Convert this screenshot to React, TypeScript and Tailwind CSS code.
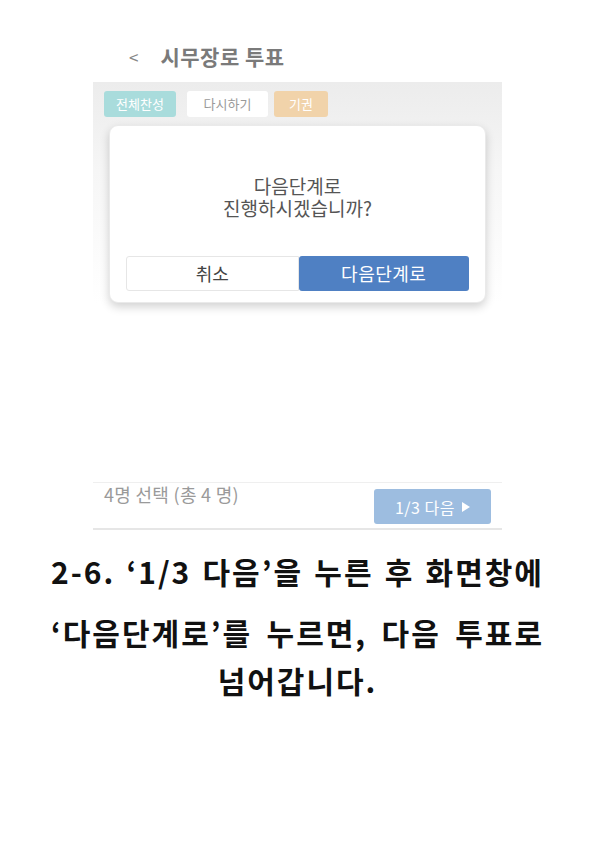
import React from "react";

const kr = { fontFamily: '"Noto Sans CJK KR", "Noto Sans", sans-serif' };

const line1 = ["2-6.", "‘1/3", "다음’을", "누른", "후", "화면창에"];
const line2 = ["‘다음단계로’를", "누르면,", "다음", "투표로"];

const App: React.FC = () => {
  return (
    <div className="w-[595px] min-h-[841px] bg-white" style={kr}>
      {/* phone screenshot */}
      <div className="mx-auto w-[409px] pt-[30px]">
        {/* header */}
        <div className="flex items-center h-[52px] pl-[36px]">
          <span className="text-[17px] text-[#888] leading-none">&lt;</span>
          <span className="ml-[22px] text-[21px] font-bold text-[#7a7a7a] tracking-[0.5px] leading-none">
            시무장로 투표
          </span>
        </div>

        {/* dimmed band with buttons + dialog */}
        <div className="bg-gradient-to-b from-[#ececec] via-[#f6f6f6] via-40% to-white">
          <div className="flex gap-[11px] pl-[11px] pt-[9px]">
            <div className="w-[72px] h-[26px] rounded-[3px] bg-[#a9dcdc] text-white text-[13px] flex items-center justify-center">
              전체찬성
            </div>
            <div className="w-[81px] h-[26px] rounded-[3px] bg-white text-[#9a9a9a] text-[13px] flex items-center justify-center">
              다시하기
            </div>
            <div className="w-[54px] h-[26px] rounded-[3px] bg-[#f1d3aa] text-white text-[13px] flex items-center justify-center -ml-[5px]">
              기권
            </div>
          </div>

          <div className="mx-[16px] mt-[8px] h-[178px] rounded-[9px] bg-white border border-[#eaeaea] shadow-[0_4px_10px_rgba(0,0,0,0.18)] flex flex-col px-[16px]">
            <div className="pt-[49px] text-center text-[19px] leading-[22px] text-[#555]">
              <div>다음단계로</div>
              <div>진행하시겠습니까?</div>
            </div>
            <div className="mt-[37px] flex h-[35px]">
              <div className="flex-1 border border-[#e6e6e6] rounded-l-[3px] bg-white text-[18px] text-[#444] flex items-center justify-center">
                취소
              </div>
              <div className="flex-1 rounded-[3px] bg-[#4f80c3] text-[18px] text-white tracking-[0.5px] flex items-center justify-center">
                다음단계로
              </div>
            </div>
          </div>
        </div>

        {/* empty list area */}
        <div className="h-[179px]" />

        {/* bottom bar */}
        <div className="h-[48px] border-t border-[#efefef] border-b-2 border-b-[#e6e6e6] flex items-start justify-between pl-[11px] pr-[11px]">
          <span className="mt-[2px] text-[18px] leading-none tracking-[0.3px] text-[#9a9a9a]">4명 선택 (총 4 명)</span>
          <div className="mt-[6px] w-[117px] h-[35px] rounded-[3px] bg-[#9dbde0] text-white text-[16px] tracking-[0.5px] flex items-center justify-center gap-[7px]">
            <span>1/3 다음</span>
            <svg width="8" height="10" viewBox="0 0 8 10">
              <path d="M0 0 L8 5 L0 10 Z" fill="white" />
            </svg>
          </div>
        </div>
      </div>

      {/* caption */}
      <div className="mx-auto w-[493px] mt-[17px] font-bold text-[30px] tracking-[2px] text-[#111] leading-[48px]">
        <div className="flex justify-between whitespace-nowrap">
          {line1.map((w) => (
            <span key={w}>{w}</span>
          ))}
        </div>
        <div className="mt-[13px] flex justify-between whitespace-nowrap">
          {line2.map((w) => (
            <span key={w}>{w}</span>
          ))}
        </div>
        <div className="text-center">넘어갑니다.</div>
      </div>
    </div>
  );
};

export default App;
